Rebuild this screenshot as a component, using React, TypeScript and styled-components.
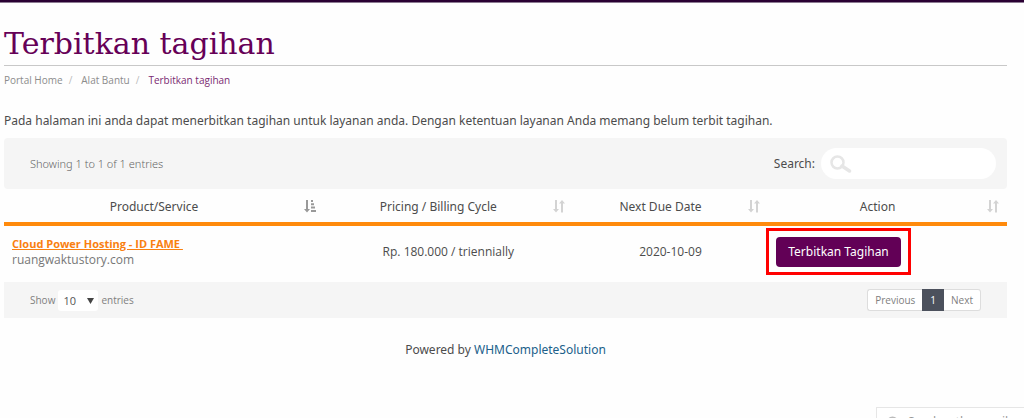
import React from "react";
import styled, { createGlobalStyle, css } from "styled-components";

const Global = createGlobalStyle`
  * { box-sizing: border-box; }
  body {
    margin: 0;
    background: #fefefe;
    color: #4c4c4c;
    font: 12px/20px "Noto Sans", "Open Sans", sans-serif;
    overflow: hidden;
  }
`;

const TopBar = styled.div`
  height: 3px;
  background: #2a0033;
  border-bottom: 1px solid #8c7a92;
`;

const Page = styled.main`
  margin: 0 17px 0 4px;
`;

const Title = styled.h1`
  margin: 0;
  padding: 21px 0 1px;
  border-bottom: 1px solid #c8c8c8;
  color: #660057;
  font: 400 30px/40px "DejaVu Serif", serif;
`;

const Crumbs = styled.nav`
  padding-top: 6px;
  font: 10px/16px "Open Sans", sans-serif;

  ol { display: flex; margin: 0; padding: 0; list-style: none; }
  li { color: #7b2a72; }
  li + li::before { content: "/"; margin: 0 9px 0 6px; color: #bbb; }
  a { color: #8c8c8c; text-decoration: none; }
`;

const Intro = styled.p`
  margin: 23px 0 7px;
`;

const Toolbar = styled.div`
  display: flex;
  justify-content: space-between;
  align-items: center;
  height: 51px;
  padding: 0 11px 0 26px;
  background: #f5f5f5;
  border-radius: 4px;
`;

const Info = styled.div`
  color: #666;
  font-size: 11px;
  font-weight: 300;
`;

const SearchLabel = styled.label`
  display: flex;
  align-items: center;
  gap: 6px;
`;

const SearchBox = styled.span`
  display: flex;
  align-items: center;
  width: 175px;
  height: 31px;
  padding-left: 9px;
  border-radius: 16px;
  background: #fff;

  input { flex: 1; min-width: 0; border: 0; outline: 0; background: transparent; font: inherit; }
`;

const Table = styled.table`
  width: 100%;
  border-collapse: separate;
  border-spacing: 0;
  table-layout: fixed;
`;

const Th = styled.th<{ $width: string }>`
  width: ${(p) => p.$width};
  height: 37px;
  padding: 2px 8px 0;
  border-bottom: 4px solid #ff8a0c;
  font-weight: 400;
`;

const Heading = styled.span`
  display: flex;
  align-items: center;

  span { flex: 1; padding-right: 8px; }
  svg { flex: none; }
`;

const Td = styled.td<{ $align?: string }>`
  height: 56px;
  padding: 0 8px 4px;
  font-family: "Open Sans", sans-serif;
  line-height: 16px;
  text-align: ${(p) => p.$align ?? "left"};
`;

const Service = styled.a`
  color: #f98010;
  font-size: 11px;
  font-weight: 700;
  white-space: pre;
`;

const Domain = styled.div`
  color: #777;
`;

const Highlight = styled.span`
  position: relative;
  display: inline-block;

  &::after {
    content: "";
    position: absolute;
    inset: -9px -10px -8px;
    border: 3px solid #f00;
    pointer-events: none;
  }
`;

const IssueButton = styled.button`
  height: 30px;
  padding: 0 12px;
  border: 0;
  border-radius: 4px;
  background: #620056;
  color: #fff;
  font: 12px/30px "Noto Sans", sans-serif;
`;

const Footer = styled.div`
  display: flex;
  justify-content: space-between;
  align-items: center;
  height: 36px;
  padding: 0 26px;
  background: #f5f5f5;
  color: #808080;
  font: 10px "Open Sans", sans-serif;
`;

const Length = styled.label`
  display: flex;
  align-items: center;
  gap: 3px;
`;

const SelectWrap = styled.span`
  position: relative;
  display: flex;

  select {
    width: 40px;
    height: 21px;
    padding: 0 5px;
    border: 0;
    border-radius: 3px;
    appearance: none;
    background: #fff;
    color: #555;
    font: 11px "Open Sans", sans-serif;
  }
  svg { position: absolute; right: 4px; top: 7px; pointer-events: none; }
`;

const Pager = styled.div`
  display: flex;
  height: 22px;
`;

const pageEdge = css`
  border: 1px solid #ddd;
  background: #fff;
  color: #808080;
`;

const PageButton = styled.button<{ $active?: boolean }>`
  padding: 0 7px;
  font: 10px "Open Sans", sans-serif;
  ${pageEdge}
  &:first-child { border-radius: 3px 0 0 3px; border-right: 0; }
  &:last-child { border-radius: 0 3px 3px 0; border-left: 0; }
  ${(p) => p.$active && css`border-color: #4c515d; background: #4c515d; color: #fff;`}
`;

const Powered = styled.footer`
  margin-top: 22px;
  text-align: center;

  a { color: #20608a; text-decoration: none; }
`;

const ChatTab = styled.aside`
  position: fixed;
  right: 0;
  bottom: -19px;
  display: flex;
  align-items: center;
  gap: 9px;
  width: 148px;
  height: 30px;
  padding-left: 9px;
  border: 1px solid #e6e6e6;
  border-right: 0;
  background: #fff;
  color: #999;
  font-size: 12px;
  white-space: nowrap;
`;

const SortBoth = () => (
  <svg width="12" height="13" viewBox="0 0 12 13" fill="#d3d3d3" aria-hidden="true">
    <path d="M2 0h2v9h2l-3 3.500L0 9h2zM8 12.500h2v-9h2L9 0 6 3.500h2z" />
  </svg>
);

const SortAsc = () => (
  <svg width="12" height="13" viewBox="0 0 12 13" fill="#999" aria-hidden="true">
    <path d="M2 0h2v9h2l-3 3.500L0 9h2zM7 0h2v2H7zM7 3.300h3v2H7zM7 6.600h4v2H7zM7 10h5v2H7z" />
  </svg>
);

const columns = [
  { label: "Product/Service", width: "31.9%", sorted: true },
  { label: "Pricing / Billing Cycle", width: "24.8%" },
  { label: "Next Due Date", width: "19.5%" },
  { label: "Action", width: "23.8%" },
];

export default function App() {
  return (
    <>
      <Global />
      <TopBar />
      <Page>
        <Title>Terbitkan tagihan</Title>
        <Crumbs aria-label="Breadcrumb">
          <ol>
            <li><a href="#home">Portal Home</a></li>
            <li><a href="#tools">Alat Bantu</a></li>
            <li aria-current="page">Terbitkan tagihan</li>
          </ol>
        </Crumbs>
        <Intro>
          Pada halaman ini anda dapat menerbitkan tagihan untuk layanan anda. Dengan ketentuan layanan Anda memang belum
          terbit tagihan.
        </Intro>
        <Toolbar>
          <Info>Showing 1 to 1 of 1 entries</Info>
          <SearchLabel>
            Search:
            <SearchBox>
              <svg width="22" height="18" viewBox="0 0 22 18" fill="none" stroke="#e6e6e6" aria-hidden="true">
                <circle cx="7.500" cy="7.500" r="6" strokeWidth="2.500" />
                <path d="M12 11l7.500 5" strokeWidth="3.500" strokeLinecap="round" />
              </svg>
              <input type="search" />
            </SearchBox>
          </SearchLabel>
        </Toolbar>
        <Table>
          <thead>
            <tr>
              {columns.map((c) => (
                <Th key={c.label} $width={c.width} scope="col">
                  <Heading>
                    <span>{c.label}</span>
                    {c.sorted ? <SortAsc /> : <SortBoth />}
                  </Heading>
                </Th>
              ))}
            </tr>
          </thead>
          <tbody>
            <tr>
              <Td>
                <Service href="#service">{"Cloud Power Hosting - ID FAME "}</Service>
                <Domain>ruangwaktustory.com</Domain>
              </Td>
              <Td $align="center">Rp. 180.000 / triennially</Td>
              <Td $align="center">2020-10-09</Td>
              <Td>
                <Highlight>
                  <IssueButton type="button">Terbitkan Tagihan</IssueButton>
                </Highlight>
              </Td>
            </tr>
          </tbody>
        </Table>
        <Footer>
          <Length>
            Show
            <SelectWrap>
              <select defaultValue="10">
                <option>10</option>
                <option>25</option>
                <option>50</option>
              </select>
              <svg width="7" height="7" viewBox="0 0 7 7" fill="#444" aria-hidden="true">
                <path d="M0 1h7L3.500 7z" />
              </svg>
            </SelectWrap>
            entries
          </Length>
          <Pager>
            <PageButton type="button">Previous</PageButton>
            <PageButton type="button" $active>1</PageButton>
            <PageButton type="button">Next</PageButton>
          </Pager>
        </Footer>
        <Powered>
          Powered by <a href="#whmcs">WHMCompleteSolution</a>
        </Powered>
      </Page>
      <ChatTab>
        <svg width="13" height="13" viewBox="0 0 13 13" fill="#bbb" aria-hidden="true">
          <circle cx="6.500" cy="6.500" r="6" />
        </svg>
        Send us the email
      </ChatTab>
    </>
  );
}
